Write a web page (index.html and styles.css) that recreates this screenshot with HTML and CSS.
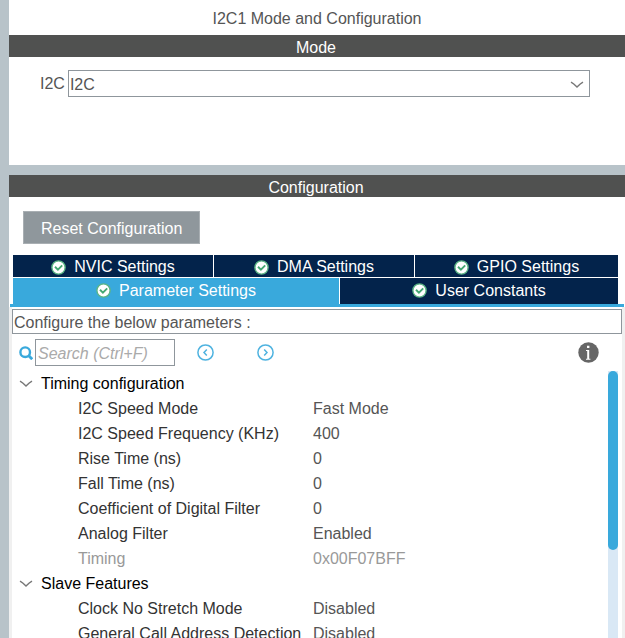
FILE: index.html
```html
<!DOCTYPE html>
<html lang="en">
<head>
<meta charset="utf-8">
<title>I2C1 Mode and Configuration</title>
<link rel="stylesheet" href="styles.css">
</head>
<body>
<svg class="symbols" aria-hidden="true">
  <symbol id="check" viewBox="0 0 15 15">
    <circle cx="7.500" cy="7.500" r="6.600" fill="#fff" stroke="#5cb586" stroke-width="1.400"/>
    <path d="M4 6.800 6.900 9.600 11.200 5.400" fill="none" stroke="#45a873" stroke-width="1.900"/>
  </symbol>
  <symbol id="chevron" viewBox="0 0 14 8">
    <path d="M1 1.200Q3.500 2.500 7 6Q10.500 2.500 13 1.200" fill="none" stroke="#777" stroke-width="1.500"/>
  </symbol>
</svg>
<main class="panel">
  <h1 class="title">I2C1 Mode and Configuration</h1>
  <section class="mode">
    <h2 class="bar">Mode</h2>
    <div class="mode-row">
      <label for="i2c">I2C</label>
      <div class="select-box">
        <select id="i2c"><option>I2C</option><option>Disable</option></select>
        <svg class="select-arrow" aria-hidden="true"><use href="#chevron"/></svg>
      </div>
    </div>
  </section>
  <section class="config">
    <h2 class="bar">Configuration</h2>
    <button class="reset" type="button">Reset Configuration</button>
    <div class="tabs" role="tablist">
      <div class="tab-row">
        <button class="tab" role="tab" type="button"><svg class="check" aria-hidden="true"><use href="#check"/></svg>NVIC Settings</button>
        <button class="tab" role="tab" type="button"><svg class="check" aria-hidden="true"><use href="#check"/></svg>DMA Settings</button>
        <button class="tab" role="tab" type="button"><svg class="check" aria-hidden="true"><use href="#check"/></svg>GPIO Settings</button>
      </div>
      <div class="tab-row tab-row-front">
        <button class="tab tab-active" role="tab" type="button" aria-selected="true"><svg class="check" aria-hidden="true"><use href="#check"/></svg>Parameter Settings</button>
        <button class="tab" role="tab" type="button"><svg class="check" aria-hidden="true"><use href="#check"/></svg>User Constants</button>
      </div>
    </div>
    <div class="content">
      <p class="hint">Configure the below parameters :</p>
      <div class="tools">
        <svg class="search-icon" viewBox="0 0 14 14" aria-hidden="true">
          <circle cx="6.200" cy="6.200" r="4.800" fill="none" stroke="#39a9dc" stroke-width="2.400"/>
          <path d="M9.500 9.500 13.200 13.200" stroke="#39a9dc" stroke-width="2.800"/>
        </svg>
        <input class="search" type="text" placeholder="Search (Ctrl+F)" aria-label="Search">
        <button class="icon-button" type="button" aria-label="Previous">
          <svg viewBox="0 0 17 17"><circle cx="8.500" cy="8.500" r="7.600"/><path d="M9.800 5.500 7 8.500 9.800 11.500"/></svg>
        </button>
        <button class="icon-button" type="button" aria-label="Next">
          <svg viewBox="0 0 17 17"><circle cx="8.500" cy="8.500" r="7.600"/><path d="M7.200 5.500 10 8.500 7.200 11.500"/></svg>
        </button>
        <button class="info" type="button" aria-label="Information">
          <svg viewBox="0 0 21 21">
            <circle cx="10.500" cy="10.500" r="10.200" fill="#666"/>
            <path d="M9 3.800h2.400v2.200H9zM8 8h3.200v8.700h1.200v1H8v-1h1.200V9H8z" fill="#fff"/>
          </svg>
        </button>
      </div>
      <div class="list">
        <table class="params">
          <colgroup><col class="name-col"><col></colgroup>
          <tbody>
            <tr class="group"><th colspan="2"><svg class="fold" aria-hidden="true"><use href="#chevron"/></svg>Timing configuration</th></tr>
            <tr><td>I2C Speed Mode</td><td>Fast Mode</td></tr>
            <tr><td>I2C Speed Frequency (KHz)</td><td>400</td></tr>
            <tr><td>Rise Time (ns)</td><td>0</td></tr>
            <tr><td>Fall Time (ns)</td><td>0</td></tr>
            <tr><td>Coefficient of Digital Filter</td><td>0</td></tr>
            <tr><td>Analog Filter</td><td>Enabled</td></tr>
            <tr class="readonly"><td>Timing</td><td>0x00F07BFF</td></tr>
          </tbody>
          <tbody>
            <tr class="group"><th colspan="2"><svg class="fold" aria-hidden="true"><use href="#chevron"/></svg>Slave Features</th></tr>
            <tr><td>Clock No Stretch Mode</td><td>Disabled</td></tr>
            <tr><td>General Call Address Detection</td><td>Disabled</td></tr>
          </tbody>
        </table>
        <div class="track"><div class="thumb"></div></div>
      </div>
    </div>
  </section>
</main>
</body>
</html>
```
FILE: styles.css
```css
* { box-sizing: border-box; }

body {
  margin: 0;
  height: 100vh;
  overflow: hidden;
  background: #b8c3c9;
  color: #555;
  font: 16px/22px "Liberation Sans", Arial, sans-serif;
}

button, input, select { font: inherit; }
button { border: 0; padding: 0; }
svg { display: block; flex: none; }
.symbols { position: absolute; width: 0; height: 0; }

.panel {
  display: flex;
  flex-direction: column;
  height: 100%;
  margin-left: 9px;
}

.title {
  margin: 0;
  padding: 8px 0 5px;
  background: #fff;
  font-size: 16px;
  font-weight: 400;
  text-align: center;
}

.bar {
  margin: 0;
  padding: 2px 2px 0 0;
  height: 22px;
  background: #505150;
  color: #fff;
  font-size: 16px;
  font-weight: 400;
  text-align: center;
}

/* Mode */
.mode {
  background: #fff;
  padding-bottom: 68px;
  margin-bottom: 10px;
}

.mode-row {
  display: flex;
  align-items: center;
  gap: 3px;
  padding: 13px 35px 0 31px;
}

.select-box { position: relative; flex: 1; }

.select-box select {
  display: block;
  appearance: none;
  width: 100%;
  height: 27px;
  padding: 2px 1px 0;
  border: 1px solid #8f969c;
  border-radius: 0;
  background: #fff;
  color: #555;
}

.select-arrow {
  position: absolute;
  right: 6px;
  top: 11px;
  width: 14px;
  height: 8px;
  pointer-events: none;
}

/* Configuration */
.config {
  display: flex;
  flex-direction: column;
  flex: 1;
  min-height: 0;
  background: #fff;
}

.reset {
  align-self: flex-start;
  margin: 14px;
  margin-bottom: 11px;
  padding: 2px 17px 0;
  height: 33px;
  border: 1px solid #a9afb3;
  background: #8f979c;
  color: #fff;
}

.tabs { border-bottom: 3px solid #39a9dc; margin: 0 1px; padding: 0 6px 0 3px; }
.tab-row {
  display: grid;
  grid-template-columns: 200fr 200fr 203fr;
  grid-template-rows: 100%;
  gap: 1px;
  height: 22px;
  margin-bottom: 1px;
}
.tab-row-front { grid-template-columns: 326fr 278fr; height: 26px; margin-bottom: 0; }

.tab {
  display: flex;
  align-items: center;
  justify-content: center;
  gap: 8px;
  padding: 2px 0 0;
  background: #03234b;
  color: #fff;
  line-height: 20px;
}

.tab-row-front .tab { padding: 0 0 1px; }
.tab-row-front .tab-active { background: #39a9dc; }
.check { width: 15px; height: 15px; }

.content {
  display: flex;
  flex-direction: column;
  flex: 1;
  min-height: 0;
  padding-top: 2px;
  border: solid #f0f0f0;
  border-width: 0 3px;
}

.hint {
  flex: none;
  margin: 0;
  height: 25px;
  padding: 2px 1px 0;
  border: 1px solid #8f969c;
}

.tools {
  display: flex;
  flex: none;
  align-items: center;
  height: 37px;
  padding: 0 23px 0 7px;
}

.search-icon { width: 14px; height: 14px; margin-right: 2px; }

.search {
  width: 140px;
  height: 27px;
  padding: 2px 2px 0;
  border: 1px solid #8f969c;
  border-radius: 0;
  font-style: italic;
}

.search::placeholder { color: #aaa; }

.icon-button { margin-left: 22px; background: none; }
.icon-button + .icon-button { margin-left: 43px; }
.icon-button svg {
  width: 17px;
  height: 17px;
  fill: none;
  stroke: #4fb3e0;
  stroke-width: 1.5;
}

.info { margin-left: auto; background: none; }
.info svg { width: 21px; height: 21px; }

.list {
  display: flex;
  flex: 1;
  align-items: flex-start;
  min-height: 0;
  overflow: hidden;
  padding-right: 4px;
}

.params {
  flex: 1;
  table-layout: fixed;
  border-collapse: collapse;
}

.name-col { width: 301px; }
.params td, .params th { height: 25px; padding: 0; white-space: nowrap; }
.params td:first-child { padding-left: 66px; color: #333; }
.group { color: #000; }
.group th { font-weight: 400; text-align: left; }
.fold { display: inline-block; width: 14px; height: 8px; margin: 0 8px 1px 7px; }
.readonly td, .readonly td:first-child { color: #999; }

.track { width: 10px; height: 100%; background: #d9e8f5; }
.thumb { height: 67%; border-radius: 5px; background: #39a9dc; }
```
